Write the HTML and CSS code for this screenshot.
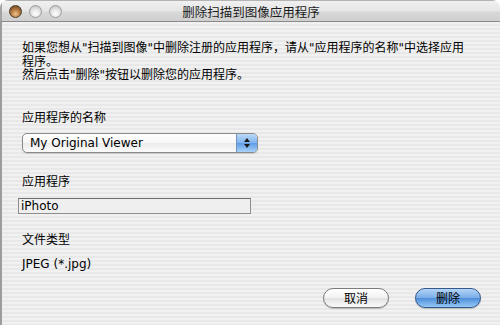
FILE: index.html
```html
<!DOCTYPE html>
<html lang="zh-CN">

<head>
    <meta charset="UTF-8">
    <meta name="viewport" content="width=device-width, initial-scale=1.0">
    <title>删除扫描到图像应用程序</title>
    <link rel="stylesheet" href="styles.css">
</head>

<body>
    <div class="window">
        <div class="titlebar">
            <div class="lights">
                <span class="light close"></span>
                <span class="light"></span>
                <span class="light"></span>
            </div>
            <div class="title">删除扫描到图像应用程序</div>
            <div></div>
        </div>

        <div class="content">
            <p class="intro">如果您想从"扫描到图像"中删除注册的应用程序，请从"应用程序的名称"中选择应用<br>程序。<br>然后点击"删除"按钮以删除您的应用程序。</p>

            <div class="label first">应用程序的名称</div>
            <div class="popup">
                <span class="popup_text">My Original Viewer</span>
                <span class="popup_arrows">
                    <svg width="8" height="12" viewBox="0 0 8 12">
                        <path d="M4 1 L7 5 L1 5 Z" fill="#1a1a1a" />
                        <path d="M1 7 L7 7 L4 11 Z" fill="#1a1a1a" />
                    </svg>
                </span>
            </div>

            <div class="label">应用程序</div>
            <div class="field">iPhoto</div>

            <div class="label type">文件类型</div>
            <div class="value">JPEG (*.jpg)</div>

            <div class="buttons">
                <button class="btn">取消</button>
                <button class="btn default">删除</button>
            </div>
        </div>
    </div>
</body>

</html>
```

FILE: styles.css
```css
body {
    margin: 0;
    background-color: #ffffff;
    font-family: "DejaVu Sans", "Noto Sans CJK SC", sans-serif;
    font-size: 12px;
    color: #000;
}

.window {
    width: 500px;
    height: 325px;
    border-radius: 8px 8px 0 0;
    overflow: hidden;
    display: flex;
    flex-direction: column;
}

.titlebar {
    height: 22px;
    box-sizing: border-box;
    display: grid;
    grid-template-columns: 1fr auto 1fr;
    align-items: center;
    background: linear-gradient(#f0f0f0 0, #e6e6e6 50%, #d8d8d8 56%, #cfcfcf 100%);
    border-top: 1px solid #b4b4b4;
    border-left: 2px solid #a4a4a4;
    border-bottom: 1px solid #8a8a8a;
}

.lights {
    display: flex;
    gap: 7px;
    padding-left: 7px;
}

.light {
    width: 11px;
    height: 11px;
    border-radius: 50%;
    border: 1px solid #9c9c9c;
    background: radial-gradient(circle at 50% 70%, #ffffff 0, #e6e6e6 45%, #b9b9b9 100%);
}

.light.close {
    border-color: #4a3a2a;
    background: radial-gradient(circle at 50% 72%, #f2c48e 0, #b57a42 45%, #5c3b1e 100%);
}

.title {
    font-size: 12.5px;
    color: #1a1a1a;
    padding-top: 1px;
}

.content {
    flex: 1;
    padding: 20px 19px 0 20px;
    border-left: 2px solid #9c9c9c;
    background: repeating-linear-gradient(to bottom, #f1f1f1 0, #f1f1f1 2px, #e8e8e8 2px, #e8e8e8 4px);
}

.intro {
    margin: 0;
    line-height: 13.5px;
    white-space: nowrap;
}

.label {
    line-height: 16px;
    margin-top: 21px;
}

.label.first {
    margin-top: 27px;
}

.label.type {
    margin-top: 18px;
}

.popup {
    margin-top: 7px;
    width: 236px;
    height: 20px;
    box-sizing: border-box;
    border: 1px solid #8a8a8a;
    border-radius: 5px;
    display: flex;
    align-items: center;
    justify-content: space-between;
    overflow: hidden;
    background: linear-gradient(#ffffff 0, #f6f6f6 50%, #ebebeb 52%, #fbfbfb 100%);
    box-shadow: 0 1px 1px rgba(0, 0, 0, 0.15);
}

.popup_text {
    padding-left: 7px;
    font-size: 12px;
}

.popup_arrows {
    width: 20px;
    height: 100%;
    display: flex;
    align-items: center;
    justify-content: center;
    border-left: 1px solid #6f93c0;
    background: linear-gradient(#bcd8f8 0, #82b5ee 48%, #5d9ce6 52%, #a9d2fa 100%);
}

.field {
    margin: 8px 0 0 -4px;
    width: 233px;
    height: 16px;
    box-sizing: border-box;
    padding-left: 2px;
    line-height: 14px;
    border: 1px solid #8e8e8e;
    border-top-color: #6e6e6e;
    background-color: #efefef;
}

.value {
    margin-top: 8px;
    line-height: 16px;
}

.buttons {
    margin-top: 16px;
    display: flex;
    justify-content: flex-end;
    gap: 26px;
}

.btn {
    width: 66px;
    height: 20px;
    padding: 0;
    border-radius: 10px;
    font-family: "Noto Sans CJK SC", sans-serif;
    font-size: 12px;
    color: #000;
    border: 1px solid #7c7c7c;
    background: linear-gradient(#ffffff 0, #f2f2f2 48%, #e2e2e2 52%, #fafafa 100%);
    box-shadow: 0 1px 1px rgba(0, 0, 0, 0.2);
}

.btn.default {
    border-color: #35598a;
    background: linear-gradient(#b4d4f6 0, #7aaee8 48%, #4f8fda 52%, #95c8f6 100%);
}
```
